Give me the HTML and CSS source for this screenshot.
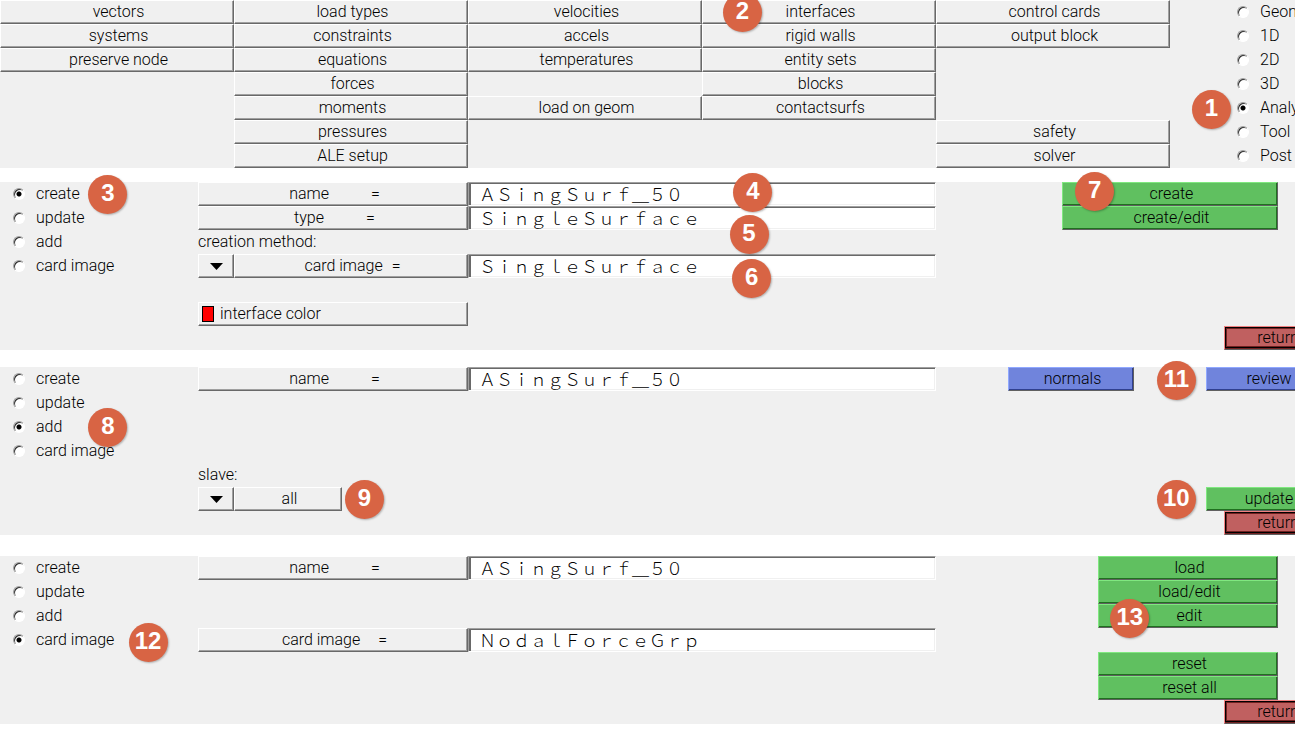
FILE: index.html
```html
<!DOCTYPE html>
<html lang="en">
<head>
<meta charset="utf-8">
<title>Interfaces panel</title>
<link rel="stylesheet" href="styles.css">
</head>
<body>
<main class="page">

<section class="panel menu">
  <div class="units menu-units">
    <div class="stack">
      <button class="btn">vectors</button>
      <button class="btn">systems</button>
      <button class="btn">preserve node</button>
    </div>
    <div class="stack">
      <button class="btn">load types</button>
      <button class="btn">constraints</button>
      <button class="btn">equations</button>
      <button class="btn">forces</button>
      <button class="btn">moments</button>
      <button class="btn">pressures</button>
      <button class="btn">ALE setup</button>
    </div>
    <div class="stack">
      <button class="btn">velocities</button>
      <button class="btn">accels</button>
      <button class="btn">temperatures</button>
      <button class="btn row-5">load on geom</button>
    </div>
    <div class="stack">
      <button class="btn">interfaces</button>
      <button class="btn">rigid walls</button>
      <button class="btn">entity sets</button>
      <button class="btn">blocks</button>
      <button class="btn">contactsurfs</button>
    </div>
    <div class="stack">
      <button class="btn">control cards</button>
      <button class="btn">output block</button>
      <button class="btn row-6">safety</button>
      <button class="btn row-7">solver</button>
    </div>
    <div class="stack radios pages">
      <label class="radio"><input type="radio" name="page">Geom</label>
      <label class="radio"><input type="radio" name="page">1D</label>
      <label class="radio"><input type="radio" name="page">2D</label>
      <label class="radio"><input type="radio" name="page">3D</label>
      <label class="radio"><input type="radio" name="page" checked>Analysis</label>
      <label class="radio"><input type="radio" name="page">Tool</label>
      <label class="radio"><input type="radio" name="page">Post</label>
    </div>
  </div>
  <span class="badge b1">1</span>
  <span class="badge b2">2</span>
</section>

<section class="panel create-panel">
  <div class="units form-units">
    <div class="stack radios">
      <label class="radio"><input type="radio" name="mode1" checked>create</label>
      <label class="radio"><input type="radio" name="mode1">update</label>
      <label class="radio"><input type="radio" name="mode1">add</label>
      <label class="radio"><input type="radio" name="mode1">card image</label>
    </div>
    <div class="stack">
      <button class="btn pair" id="name1"><span>name</span><span>=</span></button>
      <button class="btn pair" id="type1"><span>type</span><span>=</span></button>
      <span class="caption">creation method:</span>
      <div class="combo">
        <button class="btn drop" aria-label="creation method options"><svg class="arrow" viewBox="0 0 13 7"><path d="M0 0h13L6.500 7z"/></svg></button>
        <button class="btn pair near" id="card1"><span>card image</span><span>=</span></button>
      </div>
      <button class="btn color row-6"><span class="swatch"></span>interface color</button>
    </div>
    <div class="stack">
      <input class="field" type="text" value="ASingSurf_50" aria-labelledby="name1">
      <input class="field" type="text" value="SingleSurface" aria-labelledby="type1">
      <input class="field row-4" type="text" value="SingleSurface" aria-labelledby="card1">
    </div>
    <div class="actions">
      <button class="btn green wide">create</button>
      <button class="btn green wide">create/edit</button>
      <button class="btn red">return</button>
    </div>
  </div>
  <span class="badge b3">3</span>
  <span class="badge b4">4</span>
  <span class="badge b5">5</span>
  <span class="badge b6">6</span>
  <span class="badge b7">7</span>
</section>

<section class="panel add-panel">
  <div class="units form-units">
    <div class="stack radios">
      <label class="radio"><input type="radio" name="mode2">create</label>
      <label class="radio"><input type="radio" name="mode2">update</label>
      <label class="radio"><input type="radio" name="mode2" checked>add</label>
      <label class="radio"><input type="radio" name="mode2">card image</label>
    </div>
    <div class="stack">
      <button class="btn pair" id="name2"><span>name</span><span>=</span></button>
      <span class="caption row-5">slave:</span>
      <div class="combo short row-6">
        <button class="btn drop" aria-label="slave options"><svg class="arrow" viewBox="0 0 13 7"><path d="M0 0h13L6.500 7z"/></svg></button>
        <button class="btn">all</button>
      </div>
    </div>
    <div class="stack">
      <input class="field" type="text" value="ASingSurf_50" aria-labelledby="name2">
    </div>
    <div class="actions">
      <button class="btn blue normals">normals</button>
      <button class="btn blue edge">review</button>
      <button class="btn green edge row-6">update</button>
      <button class="btn red">return</button>
    </div>
  </div>
  <span class="badge b8">8</span>
  <span class="badge b9">9</span>
  <span class="badge b10">10</span>
  <span class="badge b11">11</span>
</section>

<section class="panel card-panel">
  <div class="units form-units">
    <div class="stack radios">
      <label class="radio"><input type="radio" name="mode3">create</label>
      <label class="radio"><input type="radio" name="mode3">update</label>
      <label class="radio"><input type="radio" name="mode3">add</label>
      <label class="radio"><input type="radio" name="mode3" checked>card image</label>
    </div>
    <div class="stack">
      <button class="btn pair" id="name3"><span>name</span><span>=</span></button>
      <button class="btn pair mid row-4" id="card3"><span>card image</span><span>=</span></button>
    </div>
    <div class="stack">
      <input class="field" type="text" value="ASingSurf_50" aria-labelledby="name3">
      <input class="field row-4" type="text" value="NodalForceGrp" aria-labelledby="card3">
    </div>
    <div class="actions">
      <button class="btn green medium">load</button>
      <button class="btn green medium">load/edit</button>
      <button class="btn green medium">edit</button>
      <button class="btn green medium row-5">reset</button>
      <button class="btn green medium row-6">reset all</button>
      <button class="btn red">return</button>
    </div>
  </div>
  <span class="badge b12">12</span>
  <span class="badge b13">13</span>
</section>

</main>
</body>
</html>
```
FILE: styles.css
```css
* { box-sizing: border-box; }
body {
  margin: 0;
  background: #fff;
  color: #000;
  font: 300 16px/20px Roboto, "Liberation Sans", sans-serif;
}
button, input { font: inherit; color: inherit; margin: 0; }
.page { overflow: hidden; padding-bottom: 11px; }

.panel { position: relative; background: #f0f0f0; }
.create-panel { margin-top: 14px; }
.add-panel { margin-top: 17px; }
.card-panel { margin-top: 21px; }

/* The panels are 74 units wide, of which 72 are in view. */
.units { display: grid; width: calc((100% + 1px) * 74 / 72); }
.menu-units { grid-template-columns: repeat(5, minmax(0, 13fr)) minmax(0, 9fr); }
.form-units { grid-template-columns: minmax(0, 11fr) minmax(0, 15fr) minmax(0, 26fr) minmax(0, 22fr); }
.stack, .actions { display: grid; grid-template-rows: repeat(7, 24px); }
.stack { grid-template-columns: minmax(0, 1fr); }
.actions { grid-template-columns: repeat(22, minmax(0, 1fr)); }
.row-4 { grid-row: 4; }
.row-5 { grid-row: 5; }
.row-6 { grid-row: 6; }
.row-7 { grid-row: 7; }

.btn {
  display: flex;
  align-items: center;
  justify-content: center;
  padding: 0 0 0 3px;
  border: 1px solid;
  border-color: #fff #696969 #696969 #fff;
  border-radius: 0;
  background: #f0f0f0;
  box-shadow: inset -1px -1px #a0a0a0;
  white-space: nowrap;
}
.pair { gap: 42px; }
.pair.mid { gap: 18px; }
.pair.near { gap: 9px; }
.drop { padding: 0; }
.combo { display: grid; grid-template-columns: minmax(0, 2fr) minmax(0, 13fr); }
.combo.short { grid-template-columns: minmax(0, 2fr) minmax(0, 6fr) minmax(0, 7fr); }
.arrow { width: 13px; height: 7px; }
.color { justify-content: flex-start; gap: 6px; }
.swatch { width: 12px; height: 16px; border: 1px solid #000; background: #f00; }
.caption { line-height: 24px; }

.green { background: #60c060; border-color: #80e880 #606060 #606060 #80e880; box-shadow: inset -1px -1px #207020; }
.blue { background: #7084dc; border-color: #90a8ff #606060 #606060 #90a8ff; box-shadow: inset -1px -1px #304090; }
.red {
  grid-area: 7 / 17 / auto / span 6;
  padding: 0;
  background: #c06060;
  border-color: #f08080 #606060 #606060 #f08080;
  box-shadow: inset 0 -1px #702020, inset 1px 1px #000, inset -1px -2px #000, inset 2px 2px #702020, inset -2px -3px #702020;
}
.wide { grid-column: 8 / span 12; }
.medium { grid-column: 10 / span 10; }
.normals { grid-column: 5 / span 7; }
.edge { grid-column: 16 / span 7; padding: 0; }

.radios { padding-left: 13px; }
.pages { padding-left: 67px; }
.radio { display: flex; align-items: center; gap: 11px; white-space: nowrap; }
.radio input {
  appearance: none;
  flex: none;
  width: 12px;
  height: 12px;
  border: 1px solid;
  border-color: #a0a0a0 #fff #fff #a0a0a0;
  border-radius: 50%;
  background: #fff;
  box-shadow: inset 1px 1px #303030;
}
.radio input:checked { background: radial-gradient(circle at center, #000 2px, #fff 3px); }

.field {
  width: 100%;
  min-width: 0;
  padding: 0 0 0 10px;
  border: 1px solid;
  border-color: #a0a0a0 #fff #fff #a0a0a0;
  border-radius: 0;
  background: #fff;
  box-shadow: inset 2px 1px #696969, inset -1px -1px #f0f0f0;
  font-family: "Noto Sans CJK SC", sans-serif;
  font-size: 17px;
  line-height: 22px;
  font-variant-east-asian: full-width;
}

.badge {
  position: absolute;
  width: 39px;
  height: 39px;
  margin: -19px 0 0 -19px;
  border-radius: 50%;
  background: #d86444;
  box-shadow: 1px 1px 2px #0004;
  color: #fff;
  font: 700 24px/36px "Liberation Sans", sans-serif;
  text-align: center;
}
.b1 { left: 93.5%; top: 109px; }
.b2 { left: 57.3%; top: 12px; }
.b3 { left: 8.3%; top: 12px; }
.b4 { left: 58.1%; top: 10px; }
.b5 { left: 57.8%; top: 52px; }
.b6 { left: 58%; top: 96px; }
.b7 { left: 84.5%; top: 9px; }
.b8 { left: 8.3%; top: 60px; }
.b9 { left: 28.1%; top: 132px; }
.b10 { left: 90.8%; top: 132px; }
.b11 { left: 90.8%; top: 13px; }
.b12 { left: 11.4%; top: 86px; }
.b13 { left: 87.2%; top: 62px; }
```
